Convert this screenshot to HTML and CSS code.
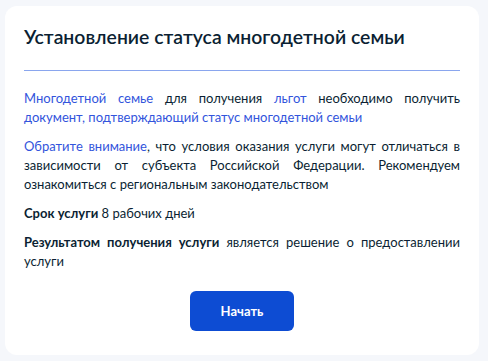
FILE: index.html
```html
<!DOCTYPE html>
<html lang="ru">
<head>
  <meta charset="UTF-8" />
  <meta name="viewport" content="width=device-width, initial-scale=1.0"/>
  <title>Установление статуса многодетной семьи</title>
  <link rel="stylesheet" href="styles.css">
</head>
<body>
  <div class="card">
    <h1>Установление статуса многодетной семьи</h1>
    <hr class="divider">

    <p><a href="#">Многодетной семье</a> для получения <a href="#">льгот</a> необходимо получить <a href="#">документ, подтверждающий статус многодетной семьи</a></p>
    <p><a href="#">Обратите внимание</a>, что условия оказания услуги могут отличаться в зависимости от субъекта Российской Федерации. Рекомендуем ознакомиться с региональным законодательством</p>
    <p><b>Срок услуги</b> 8 рабочих дней</p>
    <p><b>Результатом получения услуги</b> является решение о предоставлении услуги</p>

    <div class="actions">
      <button class="start-button">Начать</button>
    </div>
  </div>
</body>
</html>
```

FILE: styles.css
```css
body {
  font-family: Lato, 'Noto Sans', sans-serif;
  background-color: #f5f7fb;
  color: #0b1f33;
  margin: 0;
  padding: 6px 9px 9px 5px;
}

.card {
  background: #fff;
  border-radius: 12px;
  padding: 17px 19px 24px 19px;
}

h1 {
  font-size: 19.4px;
  font-weight: 600;
  margin: 0;
  line-height: 28px;
}

.divider {
  border: none;
  border-top: 1px solid #8aa6ee;
  margin: 19px 0 18px;
}

p {
  font-size: 13px;
  line-height: 19px;
  margin: 0 0 10px;
  text-align: justify;
}

p b {
  font-weight: 700;
}

a {
  color: #3254dc;
  text-decoration: none;
}

.actions {
  display: flex;
  justify-content: center;
  margin-top: 20px;
}

.start-button {
  width: 104px;
  height: 40px;
  background-color: #0d4cd3;
  color: #fff;
  border: none;
  border-radius: 6px;
  font-family: inherit;
  font-size: 13px;
  font-weight: 700;
  cursor: pointer;
}
```
